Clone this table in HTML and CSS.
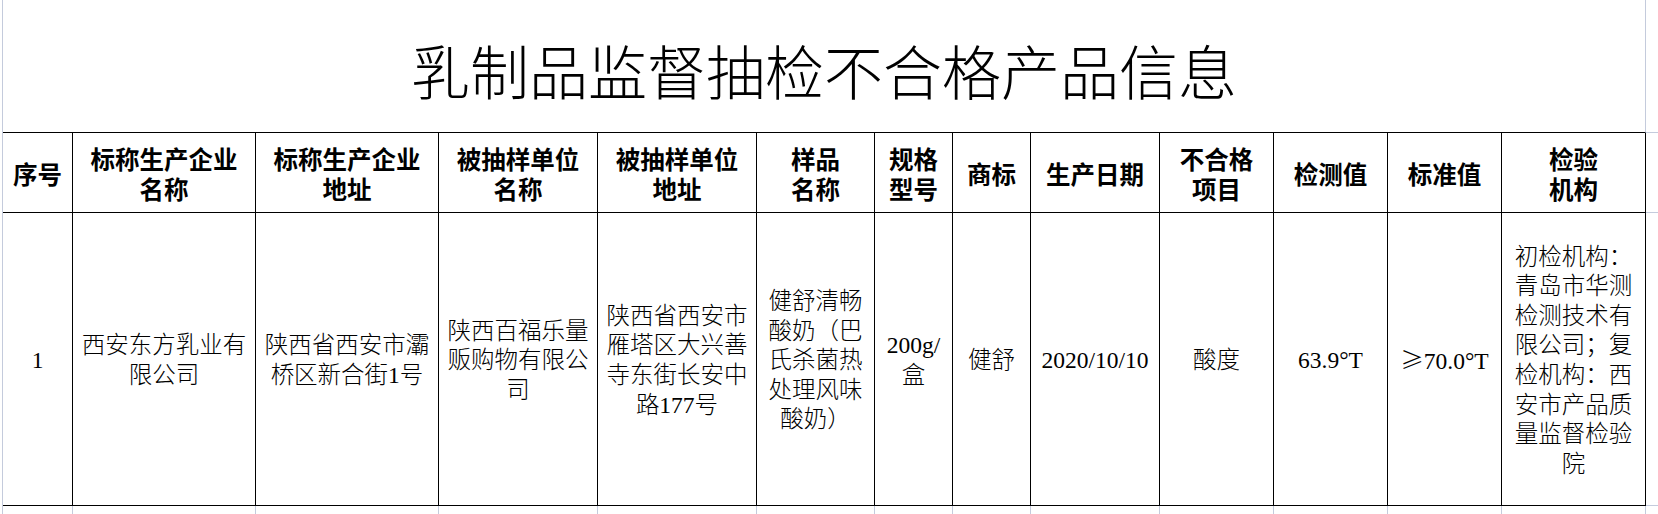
FILE: index.html
```html
<!DOCTYPE html>
<html lang="zh-CN">
<head>
<meta charset="utf-8">
<title>乳制品监督抽检不合格产品信息</title>
<link rel="stylesheet" href="styles.css">
</head>
<body>
<table class="sheet">
  <colgroup>
    <col class="c-no">
    <col class="c-wide">
    <col class="c-wide">
    <col class="c-mid">
    <col class="c-mid">
    <col class="c-name">
    <col class="c-narrow">
    <col class="c-narrow">
    <col class="c-date">
    <col class="c-val">
    <col class="c-val">
    <col class="c-val">
    <col class="c-org">
    <col class="c-spare">
  </colgroup>
  <tbody>
    <tr class="title-row">
      <td class="title-cell" colspan="13">乳制品监督抽检不合格产品信息</td>
      <td class="spare"></td>
    </tr>
    <tr class="head">
      <th>序号</th>
      <th>标称生产企业<br>名称</th>
      <th>标称生产企业<br>地址</th>
      <th>被抽样单位<br>名称</th>
      <th>被抽样单位<br>地址</th>
      <th>样品<br>名称</th>
      <th>规格<br>型号</th>
      <th>商标</th>
      <th>生产日期</th>
      <th>不合格<br>项目</th>
      <th>检测值</th>
      <th>标准值</th>
      <th>检验<br>机构</th>
      <td class="spare"></td>
    </tr>
    <tr class="data">
      <td>1</td>
      <td>西安东方乳业有限公司</td>
      <td>陕西省西安市灞桥区新合街1号</td>
      <td>陕西百福乐量贩购物有限公司</td>
      <td>陕西省西安市雁塔区大兴善寺东街长安中路177号</td>
      <td>健舒清畅酸奶（巴氏杀菌热处理风味酸奶）</td>
      <td>200g/盒</td>
      <td>健舒</td>
      <td>2020/10/10</td>
      <td>酸度</td>
      <td>63.9°T</td>
      <td><span class="sym">≥</span>70.0°T</td>
      <td class="org">初检机构：青岛市华测检测技术有限公司；复检机构：西安市产品质量监督检验院</td>
      <td class="spare"></td>
    </tr>
    <tr class="blank">
      <td></td><td></td><td></td><td></td><td></td><td></td><td></td>
      <td></td><td></td><td></td><td></td><td></td><td></td>
      <td class="spare"></td>
    </tr>
  </tbody>
</table>
</body>
</html>
```

FILE: styles.css
```css
html, body {
  margin: 0;
  padding: 0;
  background: #ffffff;
}

body {
  font-family: "Liberation Serif", "Noto Sans CJK SC", serif;
  color: #000000;
}

.sheet {
  border-collapse: separate;
  border-spacing: 0;
  table-layout: fixed;
  width: 1656px;
  margin-left: 2px;
  border-left: 1px solid #c4cbdc;
}

.c-no { width: 70px; }
.c-wide { width: 183px; }
.c-mid { width: 159px; }
.c-name { width: 118px; }
.c-narrow { width: 78px; }
.c-date { width: 129px; }
.c-val { width: 114px; }
.c-org { width: 144px; }
.c-spare { width: 12px; }

.sheet td,
.sheet th {
  box-sizing: border-box;
  padding: 0 4px;
  text-align: center;
  vertical-align: middle;
  border-right: 1px solid #000000;
  border-bottom: 1px solid #000000;
}

.title-row .title-cell {
  height: 133px;
  padding: 8px 0 0;
  border-right-color: #c4cbdc;
  font-family: "Noto Sans CJK SC", sans-serif;
  font-size: 59px;
  font-weight: 300;
  line-height: 70px;
}

.head th {
  height: 80px;
  padding-top: 3px;
  font-family: "Noto Sans CJK SC", sans-serif;
  font-size: 24.5px;
  font-weight: 700;
  line-height: 30px;
}

.data td {
  height: 293px;
  padding-top: 4px;
  font-size: 23.5px;
  font-weight: 300;
  line-height: 29.6px;
}

.data .sym {
  font-family: "Noto Sans CJK SC", sans-serif;
}

.data td.org {
  padding-left: 6px;
  padding-right: 6px;
}

.blank td {
  height: 12px;
  border-bottom: none;
  border-right-color: #c4cbdc;
}

.sheet .spare {
  padding: 0;
  border-right: none;
  border-bottom-color: #c4cbdc;
}

.blank .spare {
  border-bottom: none;
}
```
